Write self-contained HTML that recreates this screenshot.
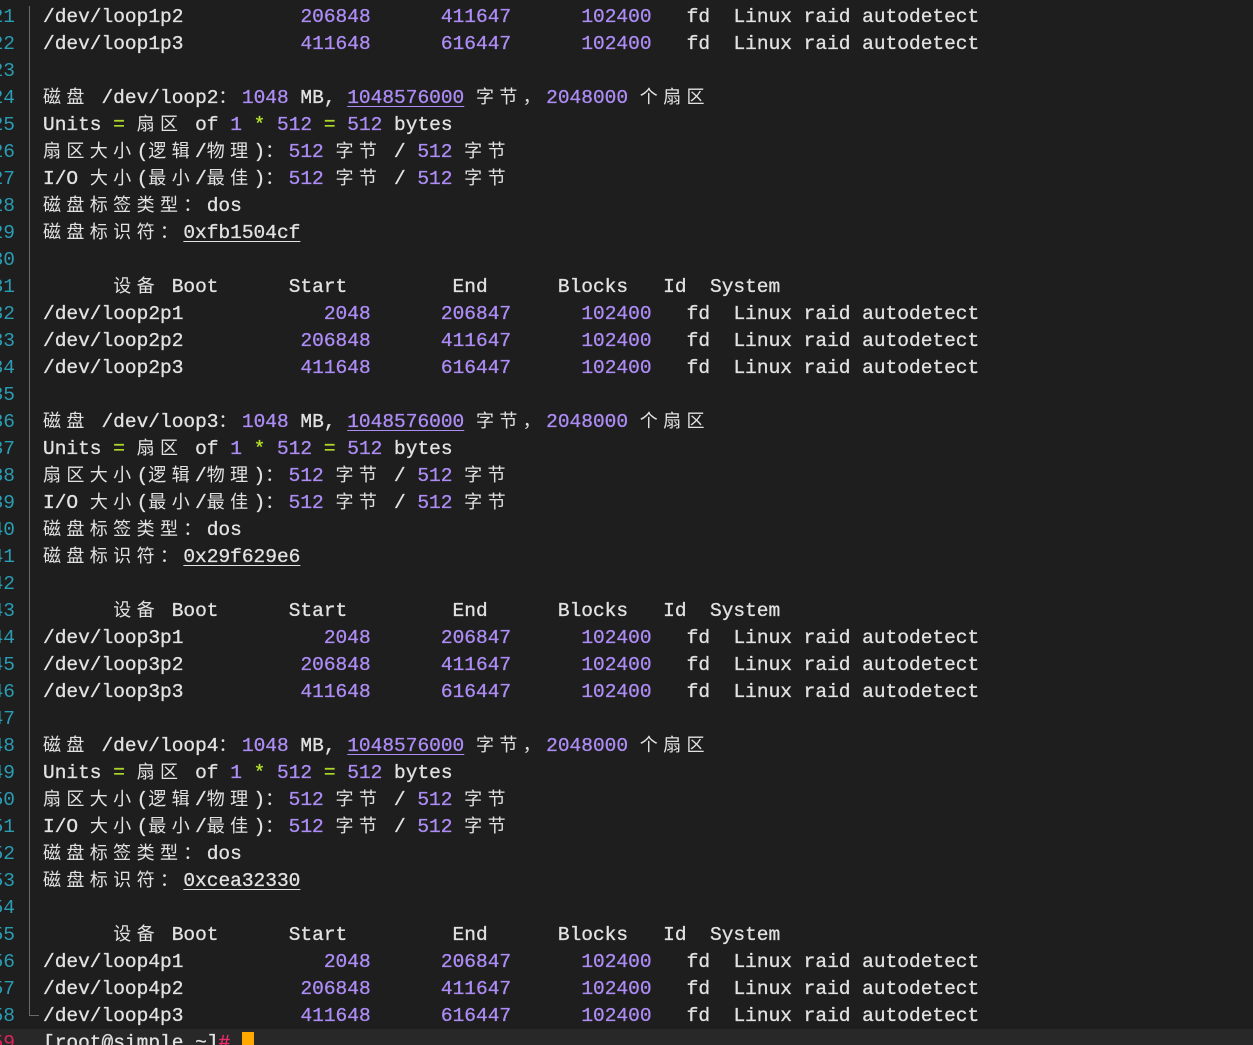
<!DOCTYPE html>
<html><head><meta charset="utf-8"><style>
html,body{margin:0;padding:0;background:#1e1e1e;width:1253px;height:1045px;overflow:hidden}
body{position:relative;font-family:"Liberation Mono","Noto Sans CJK SC",monospace;font-size:19.5px;color:#e2e2e2}
#ln{position:absolute;left:-27px;top:4px;width:42px;text-align:right;color:#2a9db4;line-height:27px;white-space:pre}
#gut{position:absolute;left:29px;top:6px;width:1px;height:1010px;background:#6a6a6a}
#gut2{position:absolute;left:29px;top:1015px;width:10px;height:1px;background:#6a6a6a}
#cur{position:absolute;left:0;top:1029px;width:1253px;height:27px;background:#282828}
#tx{position:absolute;left:43px;top:4px;white-space:pre;margin:0;font-family:inherit;font-size:19.5px;line-height:27px;-webkit-text-stroke:0.3px currentColor}
i{font-style:normal;display:inline-block;width:23.4px;font-size:18px;text-align:left;font-family:"Noto Sans CJK SC",sans-serif;line-height:1;-webkit-text-stroke:0}
.n{color:#ad8cf5}.g{color:#b6e02a}.u{text-decoration:underline;text-underline-offset:3px}
.p{color:#f2296f}
.k{display:inline-block;width:11.7px;height:18px;background:#ffa800;vertical-align:-2px}
</style></head><body>
<div id="cur"></div>
<div id="gut"></div><div id="gut2"></div>
<div id="ln">21
22
23
24
25
26
27
28
29
30
31
32
33
34
35
36
37
38
39
40
41
42
43
44
45
46
47
48
49
50
51
52
53
54
55
56
57
58
<span style="color:#e0245e">59</span></div>
<pre id="tx">/dev/loop1p2          <span class="n">206848</span>      <span class="n">411647</span>      <span class="n">102400</span>   fd  Linux raid autodetect
/dev/loop1p3          <span class="n">411648</span>      <span class="n">616447</span>      <span class="n">102400</span>   fd  Linux raid autodetect

<i>磁</i><i>盘</i> /dev/loop2<i>：</i><span class="n">1048</span> MB, <span class="n u">1048576000</span> <i>字</i><i>节</i><i>，</i><span class="n">2048000</span> <i>个</i><i>扇</i><i>区</i>
Units <span class="g">=</span> <i>扇</i><i>区</i> of <span class="n">1</span> <span class="g">*</span> <span class="n">512</span> <span class="g">=</span> <span class="n">512</span> bytes
<i>扇</i><i>区</i><i>大</i><i>小</i>(<i>逻</i><i>辑</i>/<i>物</i><i>理</i>)<i>：</i><span class="n">512</span> <i>字</i><i>节</i> / <span class="n">512</span> <i>字</i><i>节</i>
I/O <i>大</i><i>小</i>(<i>最</i><i>小</i>/<i>最</i><i>佳</i>)<i>：</i><span class="n">512</span> <i>字</i><i>节</i> / <span class="n">512</span> <i>字</i><i>节</i>
<i>磁</i><i>盘</i><i>标</i><i>签</i><i>类</i><i>型</i><i>：</i>dos
<i>磁</i><i>盘</i><i>标</i><i>识</i><i>符</i><i>：</i><span class="u">0xfb1504cf</span>

      <i>设</i><i>备</i> Boot      Start         End      Blocks   Id  System
/dev/loop2p1            <span class="n">2048</span>      <span class="n">206847</span>      <span class="n">102400</span>   fd  Linux raid autodetect
/dev/loop2p2          <span class="n">206848</span>      <span class="n">411647</span>      <span class="n">102400</span>   fd  Linux raid autodetect
/dev/loop2p3          <span class="n">411648</span>      <span class="n">616447</span>      <span class="n">102400</span>   fd  Linux raid autodetect

<i>磁</i><i>盘</i> /dev/loop3<i>：</i><span class="n">1048</span> MB, <span class="n u">1048576000</span> <i>字</i><i>节</i><i>，</i><span class="n">2048000</span> <i>个</i><i>扇</i><i>区</i>
Units <span class="g">=</span> <i>扇</i><i>区</i> of <span class="n">1</span> <span class="g">*</span> <span class="n">512</span> <span class="g">=</span> <span class="n">512</span> bytes
<i>扇</i><i>区</i><i>大</i><i>小</i>(<i>逻</i><i>辑</i>/<i>物</i><i>理</i>)<i>：</i><span class="n">512</span> <i>字</i><i>节</i> / <span class="n">512</span> <i>字</i><i>节</i>
I/O <i>大</i><i>小</i>(<i>最</i><i>小</i>/<i>最</i><i>佳</i>)<i>：</i><span class="n">512</span> <i>字</i><i>节</i> / <span class="n">512</span> <i>字</i><i>节</i>
<i>磁</i><i>盘</i><i>标</i><i>签</i><i>类</i><i>型</i><i>：</i>dos
<i>磁</i><i>盘</i><i>标</i><i>识</i><i>符</i><i>：</i><span class="u">0x29f629e6</span>

      <i>设</i><i>备</i> Boot      Start         End      Blocks   Id  System
/dev/loop3p1            <span class="n">2048</span>      <span class="n">206847</span>      <span class="n">102400</span>   fd  Linux raid autodetect
/dev/loop3p2          <span class="n">206848</span>      <span class="n">411647</span>      <span class="n">102400</span>   fd  Linux raid autodetect
/dev/loop3p3          <span class="n">411648</span>      <span class="n">616447</span>      <span class="n">102400</span>   fd  Linux raid autodetect

<i>磁</i><i>盘</i> /dev/loop4<i>：</i><span class="n">1048</span> MB, <span class="n u">1048576000</span> <i>字</i><i>节</i><i>，</i><span class="n">2048000</span> <i>个</i><i>扇</i><i>区</i>
Units <span class="g">=</span> <i>扇</i><i>区</i> of <span class="n">1</span> <span class="g">*</span> <span class="n">512</span> <span class="g">=</span> <span class="n">512</span> bytes
<i>扇</i><i>区</i><i>大</i><i>小</i>(<i>逻</i><i>辑</i>/<i>物</i><i>理</i>)<i>：</i><span class="n">512</span> <i>字</i><i>节</i> / <span class="n">512</span> <i>字</i><i>节</i>
I/O <i>大</i><i>小</i>(<i>最</i><i>小</i>/<i>最</i><i>佳</i>)<i>：</i><span class="n">512</span> <i>字</i><i>节</i> / <span class="n">512</span> <i>字</i><i>节</i>
<i>磁</i><i>盘</i><i>标</i><i>签</i><i>类</i><i>型</i><i>：</i>dos
<i>磁</i><i>盘</i><i>标</i><i>识</i><i>符</i><i>：</i><span class="u">0xcea32330</span>

      <i>设</i><i>备</i> Boot      Start         End      Blocks   Id  System
/dev/loop4p1            <span class="n">2048</span>      <span class="n">206847</span>      <span class="n">102400</span>   fd  Linux raid autodetect
/dev/loop4p2          <span class="n">206848</span>      <span class="n">411647</span>      <span class="n">102400</span>   fd  Linux raid autodetect
/dev/loop4p3          <span class="n">411648</span>      <span class="n">616447</span>      <span class="n">102400</span>   fd  Linux raid autodetect
[root@simple ~]<span class="p">#</span> <span class="k"></span></pre>
</body></html>
